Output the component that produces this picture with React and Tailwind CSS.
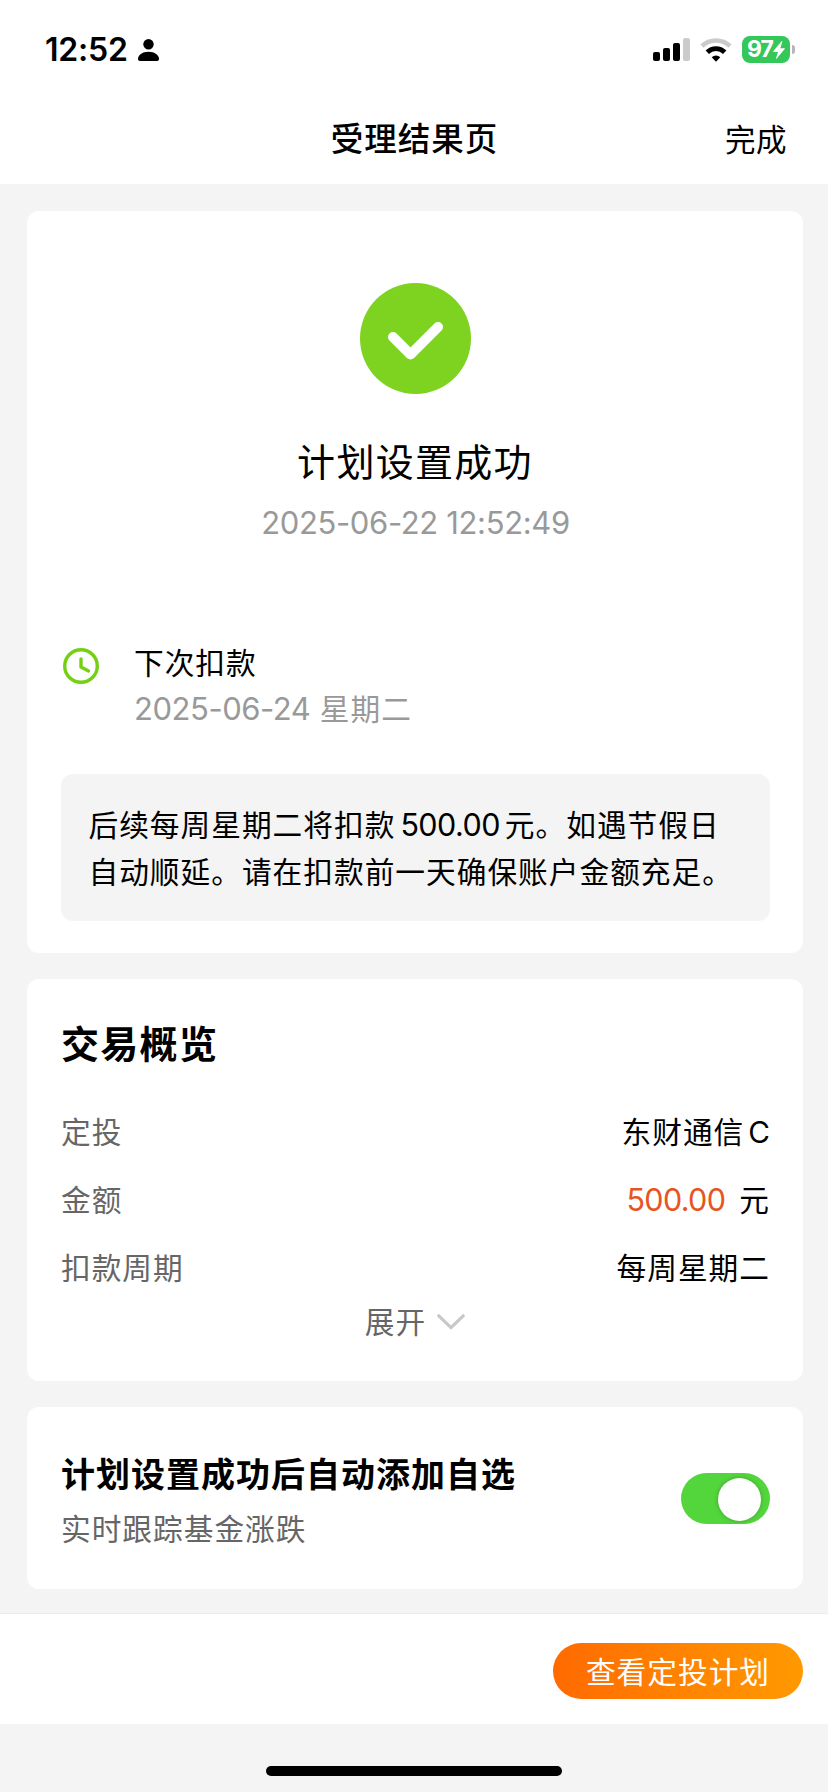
import React, { useState } from 'react';

/* ── Status bar icons ─────────────────────────────────────────────────── */
const PersonIcon = () => (
  <svg width="21" height="22" viewBox="0 0 21 22" aria-hidden="true">
    <circle cx="10.5" cy="5.3" r="5.2" />
    <path d="M2 22C.7 22 0 21.200 0 20 0 16.200 4.200 12.800 10.500 12.800S21 16.200 21 20c0 1.200-.7 2-2 2Z" />
  </svg>
);

const SignalIcon = () => (
  <svg width="37" height="23" viewBox="0 0 37 23" aria-hidden="true">
    <rect x="0" y="14" width="7" height="9" rx="2" />
    <rect x="10" y="10" width="7" height="13" rx="2" />
    <rect x="20" y="5" width="7" height="18" rx="2" />
    <rect x="30" y="0" width="7" height="23" rx="2" fill="#cbcbcb" />
  </svg>
);

const WifiIcon = () => (
  <svg width="32" height="24" viewBox="0 0 32 24" fill="none" aria-hidden="true">
    <path d="M2 8.200A20 20 0 0 1 30 8.200" stroke="#cbcbcb" strokeWidth="4.600" />
    <path d="M7.300 14.200a12.400 12.400 0 0 1 17.400 0" stroke="#000" strokeWidth="4.800" />
    <path d="M11.700 19.200a6.200 6.200 0 0 1 8.600 0L16 23.800Z" fill="#000" />
  </svg>
);

const Battery = () => (
  <div className="flex items-center gap-[2px]" aria-label="97%">
    <div className="flex h-[27px] w-[48px] items-center justify-center rounded-[8px] bg-[#34c759] text-white">
      <span className="text-[23px] leading-[27px] font-bold tracking-[-1px]">97</span>
      <svg width="12" height="18" viewBox="0 0 12 18" fill="currentColor" aria-hidden="true">
        <path d="M8.500.3 0.400 10.100c-.3.4-.1.800.4.800h4.200L3 17.200c-.2.600.3.800.7.400l8-9.500c.3-.4.1-.8-.4-.8H7.400L9.300.8C9.500.1 8.900-.2 8.500.3Z" />
      </svg>
    </div>
    <div className="h-[9px] w-[3px] rounded-r-full bg-[#b5b5ba]" />
  </div>
);

/* ── Content icons ────────────────────────────────────────────────────── */
const SuccessIcon = () => (
  <svg width="111" height="111" viewBox="0 0 111 111" fill="none" aria-hidden="true">
    <circle cx="55.5" cy="55.5" r="55.5" fill="#7ed321" />
    <path d="M33 54 50.500 71.500 78 44" stroke="#fff" strokeWidth="10" strokeLinecap="round" strokeLinejoin="round" />
  </svg>
);

const ClockIcon = () => (
  <svg width="36" height="36" viewBox="0 0 36 36" fill="none" stroke="#73d013" strokeWidth="3.4" strokeLinecap="round" strokeLinejoin="round" aria-hidden="true">
    <circle cx="18" cy="18" r="16.3" />
    <path d="M18 11v8l7.500 4" />
  </svg>
);

const ChevronDown = () => (
  <svg width="28" height="16" viewBox="0 0 28 16" fill="none" stroke="#c8c8c8" strokeWidth="3.200" strokeLinecap="round" strokeLinejoin="round" aria-hidden="true">
    <path d="M1.800 1.800 14 13.600 26.200 1.800" />
  </svg>
);

/* ── Overview row ─────────────────────────────────────────────────────── */
const Row = ({ label, children }) => (
  <div className="flex h-[68px] items-center justify-between whitespace-nowrap">
    <span className="text-[#666]">{label}</span>
    <span>{children}</span>
  </div>
);

const App = () => {
  const [autoAdd, setAutoAdd] = useState(true);

  return (
    <div className="flex h-[1792px] w-[828px] flex-col bg-[#f4f4f4] font-['Inter','Noto_Sans_CJK_SC',sans-serif] text-[29.700px] tracking-[1px] text-black">
      {/* Status bar */}
      <div className="flex h-[99px] items-center justify-between bg-white pr-[33px] pl-[45px]">
        <div className="flex items-center gap-[10px] pt-[1px]">
          <span className="text-[32px] leading-[40px] font-semibold tracking-[-0.200px]">12:52</span>
          <PersonIcon />
        </div>
        <div className="flex items-center gap-[10px]">
          <SignalIcon />
          <WifiIcon />
          <Battery />
        </div>
      </div>

      {/* Nav bar */}
      <header className="grid h-[85px] grid-cols-3 items-center bg-white pr-[41px] pb-[3px] pl-[42px]">
        <span />
        <h1 className="text-center text-[32.500px] leading-[48px] font-medium whitespace-nowrap">受理结果页</h1>
        <button className="justify-self-end text-[30.500px] leading-[48px] tracking-[0.500px]">完成</button>
      </header>

      <main className="mt-[27px] flex flex-col gap-[26px] pr-[25px] pl-[27px]">
        {/* Result */}
        <section className="flex h-[742px] flex-col rounded-[12px] bg-white pt-[72px] pr-[33px] pl-[34px]">
          <div className="flex flex-col items-center">
            <SuccessIcon />
            <h2 className="mt-[40px] pr-[1px] text-[38px] leading-[56px] tracking-[1.300px]">计划设置成功</h2>
            <p className="mt-[11px] text-[31px] leading-[44px] tracking-[-0.350px] text-[#999]">2025-06-22 12:52:49</p>
          </div>

          <div className="mt-[95px] flex gap-[35px] pl-[2px]">
            <div className="pt-[8px]">
              <ClockIcon />
            </div>
            <div className="leading-[46px]">
              <p>下次扣款</p>
              <p className="text-[#999]"><span className="text-[31px] tracking-[-0.450px]">2025-06-24</span> 星期二</p>
            </div>
          </div>

          <div className="mt-[42px] h-[147px] rounded-[12px] bg-[#f4f4f4] pt-[27px] pl-[27.500px] leading-[47px] whitespace-nowrap">
            <p>后续每周星期二将扣款<span className="mx-[5px] text-[30.500px] tracking-[-0.550px]">500.00</span>元。如遇节假日</p>
            <p>自动顺延。请在扣款前一天确保账户金额充足。</p>
          </div>
        </section>

        {/* Overview */}
        <section className="h-[402px] rounded-[12px] bg-white pt-[35px] pr-[33px] pl-[34px]">
          <h2 className="mb-[24px] text-[38px] leading-[60px] font-bold tracking-[1.300px]">交易概览</h2>
          <Row label="定投">东财通信<span className="ml-[4px] tracking-[0px]">C</span></Row>
          <Row label="金额">
            <span className="mr-[14px] text-[30.500px] tracking-[-0.650px] text-[#e8541e]">500.00</span>元
          </Row>
          <Row label="扣款周期">每周星期二</Row>
          <button className="flex h-[40px] w-full items-center justify-center gap-[11px] pr-[1px] text-[#666]">
            展开
            <ChevronDown />
          </button>
        </section>

        {/* Auto add */}
        <section className="flex h-[182px] items-center justify-between rounded-[12px] bg-white pr-[33px] pl-[34px]">
          <div className="pt-[6px]">
            <h2 className="text-[34px] leading-[56px] font-bold tracking-[1px]">计划设置成功后自动添加自选</h2>
            <p className="leading-[52px] text-[#666]">实时跟踪基金涨跌</p>
          </div>
          <button
            role="switch"
            aria-checked={autoAdd}
            onClick={() => setAutoAdd(!autoAdd)}
            className={`flex h-[51px] w-[89px] items-center rounded-full px-[9px] pt-[2px] ${autoAdd ? 'justify-end bg-[#53d53c]' : 'justify-start bg-[#ddd]'}`}
          >
            <span className="size-[43px] rounded-full bg-white shadow-[0_0_4px_rgba(0,0,0,0.25)]" />
          </button>
        </section>
      </main>

      {/* Bottom action */}
      <footer className="mt-[24px] flex h-[111px] items-start justify-end border-t border-[#ececec] bg-white pt-[29px] pr-[25px]">
        <button className="h-[56px] w-[250px] rounded-full bg-linear-to-r from-[#ff6a00] to-[#ff9900] pt-[2px] text-white">查看定投计划</button>
      </footer>
      <div className="mx-auto mt-[42px] h-[10px] w-[296px] rounded-full bg-black" />
    </div>
  );
};

export default App;
